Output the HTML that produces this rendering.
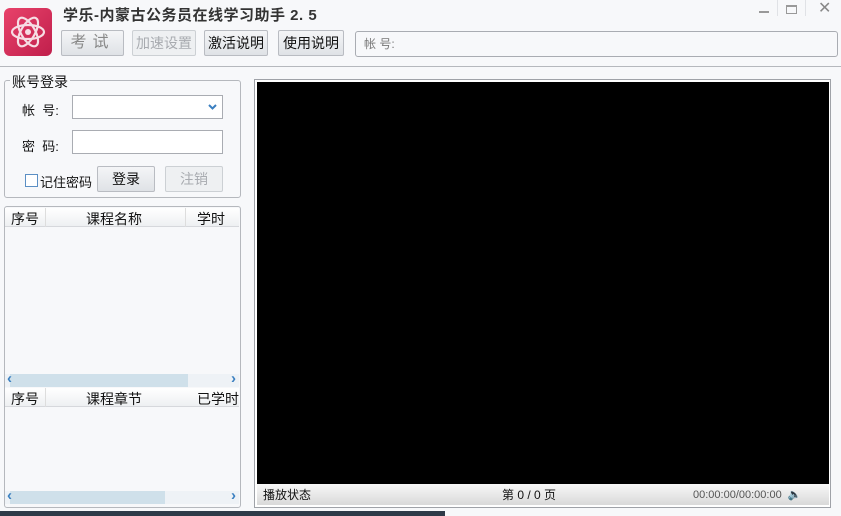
<!DOCTYPE html>
<html><head><meta charset="utf-8"><style>
*{margin:0;padding:0;box-sizing:border-box}
body{width:841px;height:516px;overflow:hidden;background:#f7f8fa;font-family:"Liberation Sans","Noto Sans CJK SC","WenQuanYi Zen Hei",sans-serif;font-size:13px;color:#111;position:relative}
.a{position:absolute}
.btn{position:absolute;height:26px;border:1px solid #b9bcc2;border-radius:2px;background:linear-gradient(#f4f5f7,#dfe2e6);text-align:center;line-height:24px;font-size:14px}
.dis{color:#a8abb0;background:#eef0f2;border-color:#ccd0d4}
.inp{position:absolute;background:#fff;border:1px solid #a9acb2}
.sb{position:absolute;height:13px;background:#eef2f6}
.sb .th{position:absolute;left:12px;top:0;height:13px;background:#cfe0ea}
.sb span{position:absolute;top:-4px;color:#3a7fc0;font-size:15px;font-weight:bold}
.hd{position:absolute;left:5px;width:234px;height:19px;background:linear-gradient(#fff,#eef0f2);border-bottom:1px solid #d6d8dc;font-size:14px}
.hd span{position:absolute;top:1px}
</style></head><body>
<div class="a" style="left:4px;top:8px;width:48px;height:48px;border-radius:6px;background:linear-gradient(135deg,#e8426a,#c01f4c)">
<svg width="48" height="48" viewBox="0 0 48 48"><g fill="none" stroke="#f6dde4" stroke-width="2.2"><ellipse cx="24" cy="24" rx="16" ry="7"/><ellipse cx="24" cy="24" rx="16" ry="7" transform="rotate(60 24 24)"/><ellipse cx="24" cy="24" rx="16" ry="7" transform="rotate(-60 24 24)"/></g><circle cx="24" cy="24" r="3" fill="#f6dde4"/></svg></div>
<div class="a" style="left:63px;top:4px;font-size:15px;font-weight:bold;color:#333;letter-spacing:0.5px">学乐-内蒙古公务员在线学习助手 2. 5</div>
<div class="btn" style="left:61px;top:30px;width:63px;color:#888;font-size:16px;letter-spacing:6px">考试</div>
<div class="btn dis" style="left:132px;top:30px;width:64px">加速设置</div>
<div class="btn" style="left:204px;top:30px;width:64px">激活说明</div>
<div class="btn" style="left:278px;top:30px;width:66px">使用说明</div>
<div class="a" style="left:355px;top:31px;width:483px;height:26px;border:1px solid #a9acb2;border-radius:3px;background:#f7f8fa;color:#777;font-size:12px;line-height:24px;padding-left:8px">帐 号:</div>
<div class="a" style="left:777px;top:0;width:1px;height:16px;background:#e0e2e6"></div>
<div class="a" style="left:805px;top:0;width:1px;height:16px;background:#e0e2e6"></div>
<div class="a" style="left:759px;top:11px;width:10px;height:2px;background:#999"></div>
<div class="a" style="left:786px;top:5px;width:11px;height:9px;border:1px solid #999;border-top-width:2px"></div>
<div class="a" style="left:818px;top:-2px;font-size:16px;color:#888">✕</div>
<div class="a" style="left:0;top:66px;width:841px;height:1px;background:#b5b8bd"></div>
<div class="a" style="left:4px;top:80px;width:237px;height:118px;border:1px solid #b5b8bd;border-radius:3px"></div>
<div class="a" style="left:10px;top:72px;background:#f7f8fa;font-size:14px;padding:0 2px">账号登录</div>
<div class="a" style="left:22px;top:100px;font-size:13px">帐&nbsp;&nbsp;号:</div>
<div class="inp" style="left:72px;top:95px;width:151px;height:24px"><svg class="a" style="right:5px;top:8px" width="9" height="6" viewBox="0 0 9 6"><path d="M1 1L4.5 4.5L8 1" fill="none" stroke="#3a7fc0" stroke-width="2"/></svg></div>
<div class="a" style="left:22px;top:136px;font-size:13px">密&nbsp;&nbsp;码:</div>
<div class="inp" style="left:72px;top:130px;width:151px;height:24px"></div>
<div class="a" style="left:25px;top:174px;width:13px;height:13px;border:1px solid #5b8fc4;background:#fff"></div>
<div class="a" style="left:40px;top:172px;font-size:13px">记住密码</div>
<div class="btn" style="left:97px;top:166px;width:58px">登录</div>
<div class="btn dis" style="left:165px;top:166px;width:58px">注销</div>
<div class="a" style="left:4px;top:206px;width:237px;height:302px;border:1px solid #b5b8bd;border-radius:3px"></div>
<div class="hd" style="top:208px"><span style="left:6px">序号</span><span style="left:81px">课程名称</span><span style="left:192px">学时</span><div class="a" style="left:40px;top:0;width:1px;height:19px;background:#ddd"></div><div class="a" style="left:180px;top:0;width:1px;height:19px;background:#ddd"></div></div>
<div class="sb" style="left:5px;top:374px;width:234px"><div class="th" style="width:178px;left:5px"></div><span style="left:2px">‹</span><span style="right:3px">›</span></div>
<div class="hd" style="top:388px"><span style="left:6px">序号</span><span style="left:81px">课程章节</span><span style="left:192px">已学时</span><div class="a" style="left:40px;top:0;width:1px;height:19px;background:#ddd"></div></div>
<div class="sb" style="left:5px;top:491px;width:234px"><div class="th" style="width:155px;left:5px"></div><span style="left:2px">‹</span><span style="right:3px">›</span></div>
<div class="a" style="left:254px;top:79px;width:577px;height:429px;border:1px solid #9fa2a8;background:#fff"></div>
<div class="a" style="left:257px;top:82px;width:572px;height:402px;background:#000"></div>
<div class="a" style="left:257px;top:484px;width:572px;height:21px;background:linear-gradient(#f8f8f8,#d9d9d9);font-size:12px;line-height:22px">
<span class="a" style="left:6px">播放状态</span><span class="a" style="left:245px">第 0 / 0 页</span>
<span class="a" style="left:436px;color:#555;font-size:11px">00:00:00/00:00:00 &nbsp;🔈</span></div>
<div class="a" style="left:0;top:511px;width:445px;height:5px;background:#2e3a48"></div>
</body></html>
